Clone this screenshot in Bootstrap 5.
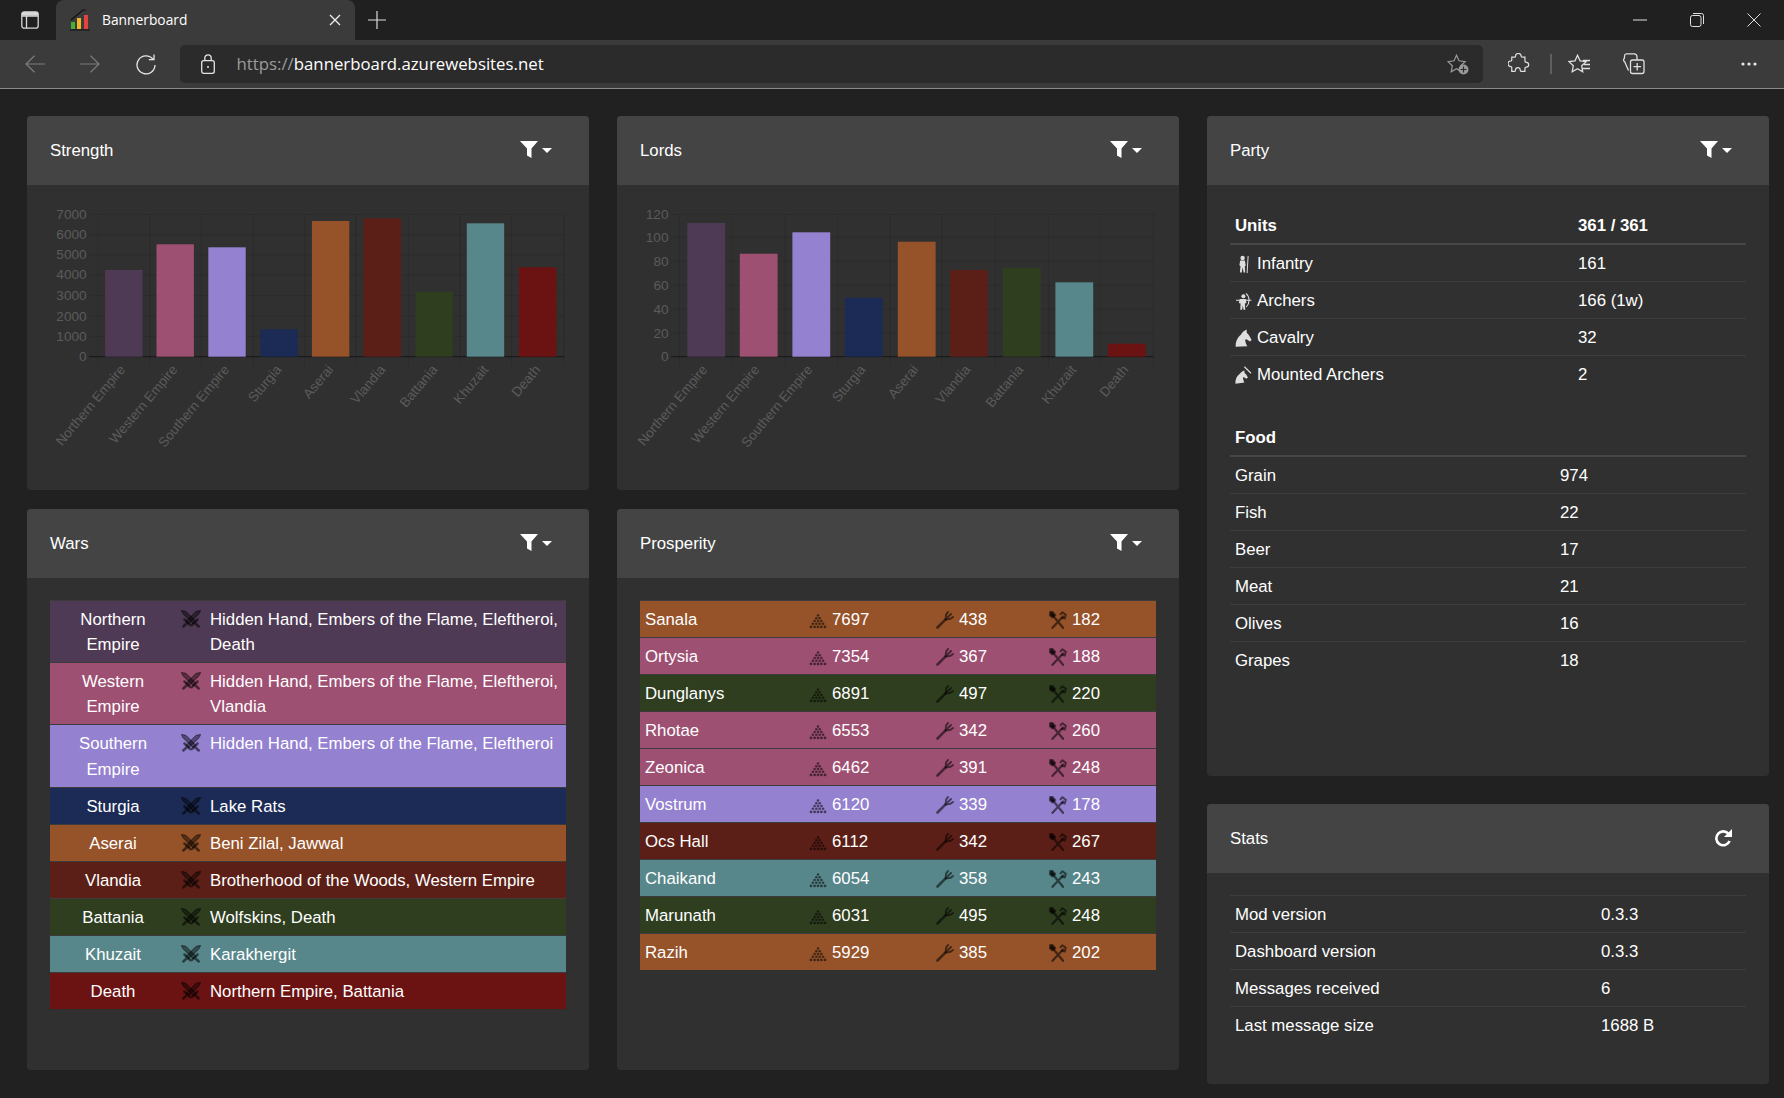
<!DOCTYPE html>
<html lang="en" data-bs-theme="dark">
<head>
<meta charset="utf-8">
<title>Bannerboard</title>
<link rel="stylesheet" href="https://cdn.jsdelivr.net/npm/bootstrap@5.3.0/dist/css/bootstrap.min.css">
<style>
html,body{height:100%}
body{background:#212121;color:#fff;font-family:"Liberation Sans",Arial,sans-serif;font-size:16.8px;line-height:1.5;overflow:hidden}
.tabbar{height:40px;background:#202020;font-family:"Open Sans","Noto Sans",sans-serif}
.sidebtn{width:56px;padding-left:3px}
.brtab{width:299px;height:40px;background:#3b3b3b;border-radius:8px 8px 0 0;padding:0 14px 0 13px;font-size:13.8px;color:#fff}
.tabname{margin-left:3px}
.plusbtn{width:44px}
.winbtn{width:57px}
.winbar{padding-right:2px}
.toolbar{height:49px;background:#3b3b3b;border-bottom:1px solid #8a8a8a;padding:5px 0 5px 7px;font-family:"Open Sans","Noto Sans",sans-serif}
.navbtn{width:55.5px}
.addr{height:38px;background:#2b2b2b;border-radius:5px;margin-left:6px;width:1303px;padding-left:21px;font-size:16.8px;color:#fff}
.addr .proto{color:#9b9b9b}
.url{margin-left:22px}
.staradd{margin-right:14px}
.tb-a{margin-left:25px;width:22px}.tb-c{margin-left:16px;width:24px}.tb-d{margin-left:31px;width:26px}.tb-e{margin-left:92px;width:24px}
.sepv{width:2px;height:20px;background:#5f5f5f;margin-left:20px}
.page{padding:27px 15px 0 27px}
.page .row{--bs-gutter-x:28px;--bs-gutter-y:0}
.stack-a{gap:19px}.stack-b{gap:28px}
.pane{--bs-card-bg:#303030;--bs-card-cap-bg:#444;--bs-card-border-width:0;--bs-card-border-radius:4px;--bs-card-inner-border-radius:4px;--bs-card-color:#fff}
.pane .card-header{height:69px;padding:0 37px 0 23px;border:0}
.pane .card-body{padding:22px 23px}
.h-s{height:374px}.h-l{height:561px}.h-p{height:660px}.h-t{height:280px}
.pane .chartbody{padding:0}
.filterbtn{--bs-btn-padding-x:0;--bs-btn-padding-y:0;--bs-btn-color:#fff;--bs-btn-border-width:0;--bs-btn-font-size:16.8px;display:flex;align-items:center}
.filterbtn.dropdown-toggle::after{margin-left:3.5px;vertical-align:0}
.filterbtn svg{margin-top:-2px}
.grid line{stroke:rgba(0,0,0,.1);stroke-width:1}
.grid .zero{stroke:rgba(0,0,0,.55)}
.axis text{font-family:"Liberation Sans",Arial,sans-serif;font-size:13.6px;fill:#5b5b5b}
.tbl{--bs-table-bg:transparent;--bs-table-color:#fff;--bs-table-border-color:#3c3c3c;margin-bottom:0;font-size:16.8px;line-height:25.2px;table-layout:fixed;width:100%}
.tbl>:not(caption)>*>*{padding:6px 6px 4.8px 5px;border-top:1px solid #3c3c3c;border-bottom:0;color:#fff}
.tbl thead th{border-top:0;border-bottom:2px solid #464646}
.tbl thead+tbody tr:first-child td{border-top:0}
.tbl.mb-gap{margin-bottom:27px}
.c-units{width:343px}.c-food{width:325px}.c-stats{width:366px}
.c-fac{width:126px}.c-ico{width:34px}
.c-pr1{width:164px}.c-pr2{width:127px}.c-pr3{width:113px}
.fac td.nm{text-align:center;padding-left:6px}
.tbl.fac td.swd{padding-left:5px;padding-right:0}
.tbl.fac td.txt{padding-left:0}
.ico{vertical-align:-4px;color:rgba(0,0,0,.55)}
.ico-sw{vertical-align:-3px}
.ico-gap{margin-right:5px}
.unit{color:#dedede;vertical-align:-4px;margin-right:5px}
.f-no{--bs-table-bg:#4f3a55}
.f-we{--bs-table-bg:#9e5073}
.f-so{--bs-table-bg:#9481d0}
.f-st{--bs-table-bg:#1c2b55}
.f-as{--bs-table-bg:#96532a}
.f-vl{--bs-table-bg:#5c1f17}
.f-ba{--bs-table-bg:#2f3e1f}
.f-kh{--bs-table-bg:#58878b}
.f-de{--bs-table-bg:#6b1212}
</style>
</head>
<body>
<svg width="0" height="0" class="d-block position-absolute">
  <defs>
    <symbol id="i-funnel" viewBox="0 0 18 17"><path fill="#fff" d="M0 0h18l-6.5 7.500V17l-4.500-2.500V7.500z"/></symbol>
    <symbol id="i-sw" viewBox="0 0 20 18" fill="currentColor" stroke="currentColor" stroke-linecap="round" stroke-linejoin="round">
      <path stroke-width="1" fill-opacity=".8" d="M.8.6 5 1.400 15 11.400 12.400 14 2 3.800z"/>
      <path stroke-width="1" fill-opacity=".8" d="M19.200.6 15 1.400 5 11.400 7.600 14 18 3.800z"/>
      <path fill="none" stroke-width="2.500" d="M16.500 9.500 10.800 15.200M3.500 9.500 9.200 15.200M14.500 13.500l3.200 3M5.500 13.500l-3.200 3"/>
    </symbol>
    <symbol id="i-pyr" viewBox="0 0 18 15" fill="currentColor">
      <circle cx="9" cy="1.500" r="1.300"/>
      <circle cx="7.300" cy="4.200" r="1.300"/><circle cx="10.700" cy="4.200" r="1.300"/>
      <circle cx="5.600" cy="7" r="1.300"/><circle cx="9" cy="7" r="1.300"/><circle cx="12.400" cy="7" r="1.300"/>
      <circle cx="3.900" cy="9.800" r="1.300"/><circle cx="7.300" cy="9.800" r="1.300"/><circle cx="10.700" cy="9.800" r="1.300"/><circle cx="14.100" cy="9.800" r="1.300"/>
      <circle cx="2" cy="12.900" r="1.400"/><circle cx="5.600" cy="12.900" r="1.400"/><circle cx="9" cy="12.900" r="1.400"/><circle cx="12.400" cy="12.900" r="1.400"/><circle cx="16" cy="12.900" r="1.400"/>
    </symbol>
    <symbol id="i-fork" viewBox="0 0 18 18" fill="none" stroke="currentColor" stroke-linecap="round" stroke-linejoin="round">
      <path stroke-width="2.600" d="M1.500 16.500 9.600 8.400"/>
      <path stroke-width="2" d="M9.600 8.400 14.600 7.800 17 6M9.600 8.400 10.200 3.400 12 1M9.600 8.400 15 3"/>
    </symbol>
    <symbol id="i-axe" viewBox="0 0 18 18" fill="none" stroke="currentColor" stroke-linecap="round" stroke-linejoin="round">
      <path stroke-width="2.300" d="M3 3.500 14 16.800M14 5.500 3.500 16.800"/>
      <path stroke-width="2.400" fill="currentColor" d="M1.500 1 3.200 1 6 4 3.400 6.200 1 4z"/>
      <path stroke-width="2" d="M11.500 3.300 13.400 1.200 16.800 3.800 15.700 7.600 13 6.800"/>
    </symbol>
    <symbol id="u-inf" viewBox="0 0 17 18" fill="currentColor"><circle cx="7.600" cy="3" r="2.200"/><path d="M5.200 5.400h4.600l1 5-1 .8.400 6.300H8.600l-.9-5.200-1 5.200H4.900l.6-6.400-1.100-.8z"/><path d="M12.600 1h1l-1 17h-1z"/></symbol>
    <symbol id="u-arc" viewBox="0 0 17 18" fill="currentColor"><circle cx="8.400" cy="4.200" r="2"/><path d="M4.800 7h6l.6 4-1.500.5.400 6.200H8.500l-.6-4.500-.8 4.500H5.300l.3-6.200L3.800 11z"/><path fill="none" stroke="currentColor" stroke-width="1.100" d="M11 1.300C15 4.800 15 11 11.300 15M1 8.200h15.400"/></symbol>
    <symbol id="u-cav" viewBox="0 0 17 18" fill="currentColor"><path d="M.6 17.700C.4 13 2.200 8.400 6 5.400 7.500 3.400 9 1.600 11.600.6l.2 3.100 2.200 2.500 2.600 4.800-1.600 1.600-3.500-2.300-1.400.5c.3 2.500 1 4.500 2.200 6.400z"/></symbol>
    <symbol id="u-mar" viewBox="0 0 17 18" fill="currentColor"><path d="M.4 17.700c-.2-4 1.200-7.600 4.400-9.900C6 6.400 7.600 5 9.400 4.500l.2 2.400 1.600 1.700 1.700 2.800-1.500 1.300-2.400-1.500-1.100.4c.2 1.800.7 3.600 1.600 5z"/><path fill="none" stroke="currentColor" stroke-width="1.200" d="M9.400.8 16 7.200"/></symbol>
  </defs>
</svg>

<header>
  <div class="tabbar d-flex align-items-center">
    <div class="sidebtn d-flex justify-content-center">
      <svg width="18" height="18" viewBox="0 0 18 18" fill="none" stroke="#d8d8d8" stroke-width="1.300"><rect x=".8" y=".8" width="16.400" height="16.400" rx="2.500"/><path d="M5.500 5v12.200M1 5h16"/><path fill="#d8d8d8" stroke="none" d="M1 1h16v3.600H1z"/></svg>
    </div>
    <div class="brtab d-flex align-items-center">
      <svg width="22" height="22" viewBox="0 0 22 22" class="me-2 flex-shrink-0"><path fill="#45b035" d="M2 13h4v7H2z"/><path fill="#f0b52a" d="M8 9h4v11H8z"/><path fill="#e2433f" d="M15 6h4v14h-4z"/><path stroke="#111" stroke-width="1.200" fill="none" d="M1 21h20M2 11 8 6l6-5h3"/></svg>
      <span class="tabname">Bannerboard</span>
      <svg class="ms-auto" width="12" height="12" viewBox="0 0 12 12" stroke="#eee" stroke-width="1.300"><path d="M1 1l10 10M11 1 1 11"/></svg>
    </div>
    <div class="plusbtn d-flex justify-content-center">
      <svg width="18" height="18" viewBox="0 0 18 18" stroke="#ddd" stroke-width="1.200"><path d="M9 0v18M0 9h18"/></svg>
    </div>
    <div class="ms-auto d-flex align-items-center winbar">
      <div class="winbtn d-flex justify-content-center"><svg width="14" height="2" viewBox="0 0 14 2" stroke="#e0e0e0"><path d="M0 1h14"/></svg></div>
      <div class="winbtn d-flex justify-content-center"><svg width="14" height="14" viewBox="0 0 14 14" fill="none" stroke="#e0e0e0"><rect x=".5" y="2.500" width="10.500" height="11" rx="2"/><path d="M3 .5h8.500a2 2 0 0 1 2 2V11"/></svg></div>
      <div class="winbtn d-flex justify-content-center"><svg width="14" height="14" viewBox="0 0 14 14" stroke="#e0e0e0"><path d="M.5.5l13 13M13.500.5l-13 13"/></svg></div>
    </div>
  </div>
  <div class="toolbar d-flex align-items-center">
    <div class="navbtn d-flex justify-content-center"><svg width="20" height="18" viewBox="0 0 20 18" fill="none" stroke="#7d7d7d" stroke-width="1.200"><path d="M20 9H1M9.500.8 1 9l8.500 8.200"/></svg></div>
    <div class="navbtn d-flex justify-content-center"><svg width="20" height="18" viewBox="0 0 20 18" fill="none" stroke="#7d7d7d" stroke-width="1.200"><path d="M0 9h19M10.500.8 19 9l-8.500 8.200"/></svg></div>
    <div class="navbtn d-flex justify-content-center"><svg width="20" height="21" viewBox="0 0 20 21" fill="none" stroke="#e8e8e8" stroke-width="1.300"><path d="M17 5.200A9 9 0 1 0 19 11"/><path d="M18 .5v5.200h-5.200"/></svg></div>
    <div class="addr d-flex align-items-center flex-shrink-0">
      <svg width="14" height="20" viewBox="0 0 14 20" fill="none" stroke="#e4e4e4" stroke-width="1.300" class="flex-shrink-0"><rect x=".7" y="6.700" width="12.600" height="12.600" rx="2"/><path d="M3.800 6.500V4a3.200 3.200 0 0 1 6.400 0v2.500"/><circle cx="7" cy="13" r="1" fill="#e4e4e4" stroke="none"/></svg>
      <span class="url"><span class="proto">https://</span>bannerboard.azurewebsites.net</span>
      <svg class="ms-auto staradd flex-shrink-0" width="22" height="21" viewBox="0 0 22 21" fill="none"><path stroke="#9a9a9a" stroke-width="1.200" d="M9.500 1.300l2.600 5.500 6 .8-4.400 4.200 1 6-5.200-3-5.300 3 1.100-6L1 7.600l6-.8z"/><circle cx="16.500" cy="15.500" r="5" fill="#9a9a9a"/><path stroke="#2b2b2b" stroke-width="1.200" d="M16.500 12.500v6M13.500 15.500h6"/></svg>
    </div>
    <div class="tb-a d-flex"><svg width="22" height="22" viewBox="0 0 22 22" fill="none" stroke="#e0e0e0" stroke-width="1.300"><path d="M8 3.500a3 3 0 0 1 6 0c0 .8 1 1 2 1h2v4c0 1 .8 1.500 1.500 1.500a2.500 2.500 0 0 1 0 5c-.7 0-1.500.5-1.500 1.500v3h-4c-.8 0-1-.5-1-1.500a2.500 2.500 0 0 0-5 0c0 1-.5 1.500-1 1.500H4v-4c0-.8-.5-1-1-1a3 3 0 0 1 0-6c.5 0 1-.3 1-1V4.500h3c.5 0 1-.3 1-1z" transform="scale(.94)"/></svg></div>
    <div class="sepv"></div>
    <div class="tb-c d-flex"><svg width="24" height="21" viewBox="0 0 24 21" fill="none" stroke="#e0e0e0" stroke-width="1.300"><path d="M9.500 1.300l2.600 5.500 6 .8-4.400 4.200 1 6-5.200-3-5.300 3 1.100-6L1 7.600l6-.8z"/><path d="M15 6.500h7M16 10.500h6M14 14.500h8"/></svg></div>
    <div class="tb-d d-flex"><svg width="22" height="22" viewBox="0 0 22 22" fill="none" stroke="#e0e0e0" stroke-width="1.300"><rect x="7.500" y="7" width="13.500" height="13.500" rx="2"/><path d="M14.200 10v7.500M10.500 13.700H18"/><path d="M5.500 17.500 1.800 9A2.500 2.500 0 0 1 1.500 5V2.700A2 2 0 0 1 3.500.8h8a3 3 0 0 1 2.500 3V7"/></svg></div>
    <div class="tb-e d-flex"><svg width="16" height="4" viewBox="0 0 16 4" fill="#e8e8e8"><circle cx="2" cy="2" r="1.600"/><circle cx="8" cy="2" r="1.600"/><circle cx="14" cy="2" r="1.600"/></svg></div>
  </div>
</header>

<main class="page">
  <div class="row">
    <div class="col-4 d-flex flex-column stack-a">
      <div class="card pane h-s">
        <div class="card-header d-flex align-items-center justify-content-between">
          <span>Strength</span>
          <button type="button" class="btn filterbtn dropdown-toggle"><svg width="18" height="17"><use href="#i-funnel"/></svg></button>
        </div>
        <div class="card-body chartbody">
          <svg width="562" height="305" viewBox="0 0 562 305" class="d-block">
            <g class="grid">
              <line x1="62" x2="537" y1="29.300" y2="29.300"/><line x1="62" x2="537" y1="49.700" y2="49.700"/><line x1="62" x2="537" y1="69.700" y2="69.700"/><line x1="62" x2="537" y1="90" y2="90"/><line x1="62" x2="537" y1="110.700" y2="110.700"/><line x1="62" x2="537" y1="131.300" y2="131.300"/><line x1="62" x2="537" y1="151.300" y2="151.300"/>
              <line x1="70.700" x2="70.700" y1="29" y2="182"/><line x1="122.800" x2="122.800" y1="29" y2="182"/><line x1="173.900" x2="173.900" y1="29" y2="182"/><line x1="226" x2="226" y1="29" y2="182"/><line x1="277.800" x2="277.800" y1="29" y2="182"/><line x1="329.200" x2="329.200" y1="29" y2="182"/><line x1="381.400" x2="381.400" y1="29" y2="182"/><line x1="432.800" x2="432.800" y1="29" y2="182"/><line x1="484.600" x2="484.600" y1="29" y2="182"/><line x1="536.800" x2="536.800" y1="29" y2="182"/>
              <line class="zero" x1="62" x2="537" y1="171.700" y2="171.700"/>
            </g>
            <g>
              <rect fill="#4f3a55" x="78.100" y="85" width="37.400" height="86.700"/>
              <rect fill="#9e5073" x="129.500" y="59.300" width="37.400" height="112.400"/>
              <rect fill="#9481d0" x="181.300" y="62.300" width="37.400" height="109.400"/>
              <rect fill="#1c2b55" x="233.400" y="144.300" width="37.400" height="27.400"/>
              <rect fill="#96532a" x="284.900" y="36" width="37.400" height="135.700"/>
              <rect fill="#5c1f17" x="336.600" y="33.300" width="37.400" height="138.400"/>
              <rect fill="#2f3e1f" x="388.400" y="106.700" width="37.400" height="65"/>
              <rect fill="#58878b" x="439.800" y="38.300" width="37.400" height="133.400"/>
              <rect fill="#6b1212" x="492" y="82.300" width="37.400" height="89.400"/>
            </g>
            <g class="axis" text-anchor="end">
              <text x="59.600" y="34">7000</text><text x="59.600" y="54">6000</text><text x="59.600" y="74">5000</text><text x="59.600" y="94.300">4000</text><text x="59.600" y="115">3000</text><text x="59.600" y="135.600">2000</text><text x="59.600" y="155.600">1000</text><text x="59.600" y="176.400">0</text>
              <text transform="translate(99 185) rotate(-50)">Northern Empire</text>
              <text transform="translate(151 185) rotate(-50)">Western Empire</text>
              <text transform="translate(203 185) rotate(-50)">Southern Empire</text>
              <text transform="translate(255 185) rotate(-50)">Sturgia</text>
              <text transform="translate(307 185) rotate(-50)">Aserai</text>
              <text transform="translate(359 185) rotate(-50)">Vlandia</text>
              <text transform="translate(411 185) rotate(-50)">Battania</text>
              <text transform="translate(462 185) rotate(-50)">Khuzait</text>
              <text transform="translate(514 185) rotate(-50)">Death</text>
            </g>
          </svg>
        </div>
      </div>
      <div class="card pane h-l">
        <div class="card-header d-flex align-items-center justify-content-between">
          <span>Wars</span>
          <button type="button" class="btn filterbtn dropdown-toggle"><svg width="18" height="17"><use href="#i-funnel"/></svg></button>
        </div>
        <div class="card-body">
          <table class="table tbl fac">
            <colgroup><col class="c-fac"><col class="c-ico"><col></colgroup>
            <tbody>
              <tr class="f-no"><td class="nm">Northern Empire</td><td class="swd"><svg class="ico ico-sw" width="20" height="18"><use href="#i-sw"/></svg></td><td class="txt">Hidden Hand, Embers of the Flame, Eleftheroi, Death</td></tr>
              <tr class="f-we"><td class="nm">Western Empire</td><td class="swd"><svg class="ico ico-sw" width="20" height="18"><use href="#i-sw"/></svg></td><td class="txt">Hidden Hand, Embers of the Flame, Eleftheroi, Vlandia</td></tr>
              <tr class="f-so"><td class="nm">Southern Empire</td><td class="swd"><svg class="ico ico-sw" width="20" height="18"><use href="#i-sw"/></svg></td><td class="txt">Hidden Hand, Embers of the Flame, Eleftheroi</td></tr>
              <tr class="f-st"><td class="nm">Sturgia</td><td class="swd"><svg class="ico ico-sw" width="20" height="18"><use href="#i-sw"/></svg></td><td class="txt">Lake Rats</td></tr>
              <tr class="f-as"><td class="nm">Aserai</td><td class="swd"><svg class="ico ico-sw" width="20" height="18"><use href="#i-sw"/></svg></td><td class="txt">Beni Zilal, Jawwal</td></tr>
              <tr class="f-vl"><td class="nm">Vlandia</td><td class="swd"><svg class="ico ico-sw" width="20" height="18"><use href="#i-sw"/></svg></td><td class="txt">Brotherhood of the Woods, Western Empire</td></tr>
              <tr class="f-ba"><td class="nm">Battania</td><td class="swd"><svg class="ico ico-sw" width="20" height="18"><use href="#i-sw"/></svg></td><td class="txt">Wolfskins, Death</td></tr>
              <tr class="f-kh"><td class="nm">Khuzait</td><td class="swd"><svg class="ico ico-sw" width="20" height="18"><use href="#i-sw"/></svg></td><td class="txt">Karakhergit</td></tr>
              <tr class="f-de"><td class="nm">Death</td><td class="swd"><svg class="ico ico-sw" width="20" height="18"><use href="#i-sw"/></svg></td><td class="txt">Northern Empire, Battania</td></tr>
            </tbody>
          </table>
        </div>
      </div>
    </div>

    <div class="col-4 d-flex flex-column stack-a">
      <div class="card pane h-s">
        <div class="card-header d-flex align-items-center justify-content-between">
          <span>Lords</span>
          <button type="button" class="btn filterbtn dropdown-toggle"><svg width="18" height="17"><use href="#i-funnel"/></svg></button>
        </div>
        <div class="card-body chartbody">
          <svg width="562" height="305" viewBox="0 0 562 305" class="d-block">
            <g class="grid">
              <line x1="54" x2="536.400" y1="29.300" y2="29.300"/><line x1="54" x2="536.400" y1="52.300" y2="52.300"/><line x1="54" x2="536.400" y1="76.300" y2="76.300"/><line x1="54" x2="536.400" y1="100.300" y2="100.300"/><line x1="54" x2="536.400" y1="124.300" y2="124.300"/><line x1="54" x2="536.400" y1="148" y2="148"/>
              <line x1="62.200" x2="62.200" y1="29" y2="182"/><line x1="115.100" x2="115.100" y1="29" y2="182"/><line x1="168" x2="168" y1="29" y2="182"/><line x1="220.900" x2="220.900" y1="29" y2="182"/><line x1="273" x2="273" y1="29" y2="182"/><line x1="325.200" x2="325.200" y1="29" y2="182"/><line x1="378.500" x2="378.500" y1="29" y2="182"/><line x1="431.700" x2="431.700" y1="29" y2="182"/><line x1="483.100" x2="483.100" y1="29" y2="182"/><line x1="536.400" x2="536.400" y1="29" y2="182"/>
              <line class="zero" x1="54" x2="536.400" y1="171.700" y2="171.700"/>
            </g>
            <g>
              <rect fill="#4f3a55" x="70.300" y="38" width="37.800" height="133.700"/>
              <rect fill="#9e5073" x="122.800" y="68.700" width="37.800" height="103"/>
              <rect fill="#9481d0" x="175.400" y="47.300" width="37.800" height="124.400"/>
              <rect fill="#1c2b55" x="227.900" y="112.700" width="37.800" height="59"/>
              <rect fill="#96532a" x="280.800" y="56.700" width="37.800" height="115"/>
              <rect fill="#5c1f17" x="333" y="85" width="37.800" height="86.700"/>
              <rect fill="#2f3e1f" x="385.900" y="82.700" width="37.800" height="89"/>
              <rect fill="#58878b" x="438.400" y="97.300" width="37.800" height="74.400"/>
              <rect fill="#6b1212" x="490.900" y="158.700" width="37.800" height="13"/>
            </g>
            <g class="axis" text-anchor="end">
              <text x="51.500" y="34">120</text><text x="51.500" y="57">100</text><text x="51.500" y="81">80</text><text x="51.500" y="105">60</text><text x="51.500" y="129">40</text><text x="51.500" y="152.700">20</text><text x="51.500" y="176.400">0</text>
              <text transform="translate(91 185) rotate(-50)">Northern Empire</text>
              <text transform="translate(143 185) rotate(-50)">Western Empire</text>
              <text transform="translate(196 185) rotate(-50)">Southern Empire</text>
              <text transform="translate(249 185) rotate(-50)">Sturgia</text>
              <text transform="translate(302 185) rotate(-50)">Aserai</text>
              <text transform="translate(354 185) rotate(-50)">Vlandia</text>
              <text transform="translate(407 185) rotate(-50)">Battania</text>
              <text transform="translate(460 185) rotate(-50)">Khuzait</text>
              <text transform="translate(512 185) rotate(-50)">Death</text>
            </g>
          </svg>
        </div>
      </div>
      <div class="card pane h-l">
        <div class="card-header d-flex align-items-center justify-content-between">
          <span>Prosperity</span>
          <button type="button" class="btn filterbtn dropdown-toggle"><svg width="18" height="17"><use href="#i-funnel"/></svg></button>
        </div>
        <div class="card-body">
          <table class="table tbl">
            <colgroup><col class="c-pr1"><col class="c-pr2"><col class="c-pr3"><col></colgroup>
            <tbody>
              <tr class="f-as"><td>Sanala</td><td><svg class="ico ico-gap" width="18" height="15"><use href="#i-pyr"/></svg>7697</td><td><svg class="ico ico-gap" width="18" height="18"><use href="#i-fork"/></svg>438</td><td><svg class="ico ico-gap" width="18" height="18"><use href="#i-axe"/></svg>182</td></tr>
              <tr class="f-we"><td>Ortysia</td><td><svg class="ico ico-gap" width="18" height="15"><use href="#i-pyr"/></svg>7354</td><td><svg class="ico ico-gap" width="18" height="18"><use href="#i-fork"/></svg>367</td><td><svg class="ico ico-gap" width="18" height="18"><use href="#i-axe"/></svg>188</td></tr>
              <tr class="f-ba"><td>Dunglanys</td><td><svg class="ico ico-gap" width="18" height="15"><use href="#i-pyr"/></svg>6891</td><td><svg class="ico ico-gap" width="18" height="18"><use href="#i-fork"/></svg>497</td><td><svg class="ico ico-gap" width="18" height="18"><use href="#i-axe"/></svg>220</td></tr>
              <tr class="f-we"><td>Rhotae</td><td><svg class="ico ico-gap" width="18" height="15"><use href="#i-pyr"/></svg>6553</td><td><svg class="ico ico-gap" width="18" height="18"><use href="#i-fork"/></svg>342</td><td><svg class="ico ico-gap" width="18" height="18"><use href="#i-axe"/></svg>260</td></tr>
              <tr class="f-we"><td>Zeonica</td><td><svg class="ico ico-gap" width="18" height="15"><use href="#i-pyr"/></svg>6462</td><td><svg class="ico ico-gap" width="18" height="18"><use href="#i-fork"/></svg>391</td><td><svg class="ico ico-gap" width="18" height="18"><use href="#i-axe"/></svg>248</td></tr>
              <tr class="f-so"><td>Vostrum</td><td><svg class="ico ico-gap" width="18" height="15"><use href="#i-pyr"/></svg>6120</td><td><svg class="ico ico-gap" width="18" height="18"><use href="#i-fork"/></svg>339</td><td><svg class="ico ico-gap" width="18" height="18"><use href="#i-axe"/></svg>178</td></tr>
              <tr class="f-vl"><td>Ocs Hall</td><td><svg class="ico ico-gap" width="18" height="15"><use href="#i-pyr"/></svg>6112</td><td><svg class="ico ico-gap" width="18" height="18"><use href="#i-fork"/></svg>342</td><td><svg class="ico ico-gap" width="18" height="18"><use href="#i-axe"/></svg>267</td></tr>
              <tr class="f-kh"><td>Chaikand</td><td><svg class="ico ico-gap" width="18" height="15"><use href="#i-pyr"/></svg>6054</td><td><svg class="ico ico-gap" width="18" height="18"><use href="#i-fork"/></svg>358</td><td><svg class="ico ico-gap" width="18" height="18"><use href="#i-axe"/></svg>243</td></tr>
              <tr class="f-ba"><td>Marunath</td><td><svg class="ico ico-gap" width="18" height="15"><use href="#i-pyr"/></svg>6031</td><td><svg class="ico ico-gap" width="18" height="18"><use href="#i-fork"/></svg>495</td><td><svg class="ico ico-gap" width="18" height="18"><use href="#i-axe"/></svg>248</td></tr>
              <tr class="f-as"><td>Razih</td><td><svg class="ico ico-gap" width="18" height="15"><use href="#i-pyr"/></svg>5929</td><td><svg class="ico ico-gap" width="18" height="18"><use href="#i-fork"/></svg>385</td><td><svg class="ico ico-gap" width="18" height="18"><use href="#i-axe"/></svg>202</td></tr>
            </tbody>
          </table>
        </div>
      </div>
    </div>

    <div class="col-4 d-flex flex-column stack-b">
      <div class="card pane h-p">
        <div class="card-header d-flex align-items-center justify-content-between">
          <span>Party</span>
          <button type="button" class="btn filterbtn dropdown-toggle"><svg width="18" height="17"><use href="#i-funnel"/></svg></button>
        </div>
        <div class="card-body">
          <table class="table tbl mb-gap">
            <colgroup><col class="c-units"><col></colgroup>
            <thead><tr><th>Units</th><th>361 / 361</th></tr></thead>
            <tbody>
              <tr><td><svg class="unit" width="17" height="18"><use href="#u-inf"/></svg>Infantry</td><td>161</td></tr>
              <tr><td><svg class="unit" width="17" height="18"><use href="#u-arc"/></svg>Archers</td><td>166 (1w)</td></tr>
              <tr><td><svg class="unit" width="17" height="18"><use href="#u-cav"/></svg>Cavalry</td><td>32</td></tr>
              <tr><td><svg class="unit" width="17" height="18"><use href="#u-mar"/></svg>Mounted Archers</td><td>2</td></tr>
            </tbody>
          </table>
          <table class="table tbl">
            <colgroup><col class="c-food"><col></colgroup>
            <thead><tr><th colspan="2">Food</th></tr></thead>
            <tbody>
              <tr><td>Grain</td><td>974</td></tr>
              <tr><td>Fish</td><td>22</td></tr>
              <tr><td>Beer</td><td>17</td></tr>
              <tr><td>Meat</td><td>21</td></tr>
              <tr><td>Olives</td><td>16</td></tr>
              <tr><td>Grapes</td><td>18</td></tr>
            </tbody>
          </table>
        </div>
      </div>
      <div class="card pane h-t">
        <div class="card-header d-flex align-items-center justify-content-between">
          <span>Stats</span>
          <button type="button" class="btn filterbtn" aria-label="Refresh"><svg width="18" height="18" viewBox="0 0 18 18" fill="none"><path stroke="#fff" stroke-width="2.600" d="M14.800 5.200A6.900 6.900 0 1 0 15.600 12"/><path fill="#fff" d="M18 0v8h-8z"/></svg></button>
        </div>
        <div class="card-body">
          <table class="table tbl">
            <colgroup><col class="c-stats"><col></colgroup>
            <tbody>
              <tr><td>Mod version</td><td>0.3.3</td></tr>
              <tr><td>Dashboard version</td><td>0.3.3</td></tr>
              <tr><td>Messages received</td><td>6</td></tr>
              <tr><td>Last message size</td><td>1688 B</td></tr>
            </tbody>
          </table>
        </div>
      </div>
    </div>
  </div>
</main>
<script src="https://cdn.jsdelivr.net/npm/bootstrap@5.3.0/dist/js/bootstrap.bundle.min.js"></script>
</body>
</html>
